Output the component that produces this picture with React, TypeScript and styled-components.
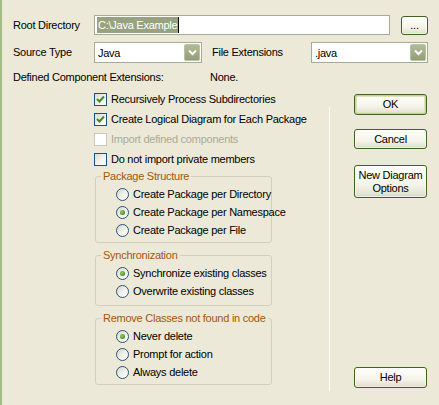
import React from "react";
import styled, { createGlobalStyle, css } from "styled-components";

const GlobalStyle = createGlobalStyle`
  html, body {
    margin: 0;
    padding: 0;
    background: #ece9d8;
  }
  body {
    font-family: "Liberation Sans", Arial, sans-serif;
    font-size: 11px;
    letter-spacing: -0.25px;
    color: #000;
  }
`;

const Window = styled.div`
  width: 439px;
  height: 405px;
  box-sizing: border-box;
  background: #ece9d8;
  border-left: 2px solid #a4bd86;
  padding: 15px 0 0 11px;
  display: flex;
  flex-direction: column;
`;

const Row = styled.div<{ $top?: number }>`
  display: flex;
  align-items: center;
  margin-top: ${(p) => p.$top ?? 0}px;
`;

const Label = styled.span<{ $width: number; $indent?: number }>`
  width: ${(p) => p.$width}px;
  margin-left: ${(p) => p.$indent ?? 0}px;
  line-height: 13px;
  white-space: nowrap;
  flex-shrink: 0;
`;

const TextBox = styled.div`
  width: 296px;
  height: 20px;
  box-sizing: border-box;
  border: 1px solid #a5ac93;
  background: #fff;
  padding: 1px 2px;
  display: flex;
  align-items: stretch;
`;

const Selected = styled.span`
  background: #98a27f;
  color: #fff;
  padding: 0 1px;
  line-height: 16px;
`;

const Caret = styled.span`
  width: 1px;
  background: #000;
`;

const XpButton = styled.button<{ $w: number; $h: number; $default?: boolean }>`
  width: ${(p) => p.$w}px;
  height: ${(p) => p.$h}px;
  box-sizing: border-box;
  padding: 0;
  font-family: inherit;
  font-size: 11px;
  letter-spacing: inherit;
  line-height: 13px;
  color: #000;
  border: 1px solid #3d6325;
  border-radius: 3px;
  background: linear-gradient(#fffffb 0%, #f5f4ea 60%, #e6e3d4 90%, #d6d0c0 100%);
  box-shadow: inset 0 0 0 1px rgba(255, 255, 255, 0.6);
  ${(p) =>
    p.$default &&
    css`
      box-shadow: inset 0 0 0 1px #bfd48f, inset 0 0 0 2px #d9e5b8;
    `}
`;

const Combo = styled.div<{ $w: number }>`
  width: ${(p) => p.$w}px;
  height: 21px;
  box-sizing: border-box;
  border: 1px solid #a5ac93;
  background: #fff;
  display: flex;
  align-items: center;
  padding: 1px;
`;

const ComboText = styled.span`
  flex: 1;
  padding-left: 2px;
`;

const DropArrow = styled.span`
  width: 16px;
  height: 17px;
  box-sizing: border-box;
  border: 1px solid #b9c1a4;
  border-radius: 2px;
  background: linear-gradient(#b3bc98, #929d77);
  display: flex;
  align-items: center;
  justify-content: center;
`;

const Body = styled.div`
  display: flex;
  margin-top: 5px;
  flex: 1;
`;

const Options = styled.div`
  position: relative;
  margin-left: 81px;
  width: 236px;
  display: flex;
  flex-direction: column;
  &::after {
    content: "";
    position: absolute;
    right: 0;
    top: 18px;
    bottom: 14px;
    width: 1px;
    background: #fff;
  }
`;

const CheckRow = styled.label<{ $disabled?: boolean }>`
  height: 20px;
  display: flex;
  align-items: center;
  gap: 4px;
  white-space: nowrap;
  color: ${(p) => (p.$disabled ? "#aca899" : "#000")};
`;

const Box = styled.span<{ $disabled?: boolean }>`
  width: 13px;
  height: 13px;
  box-sizing: border-box;
  border: 1px solid ${(p) => (p.$disabled ? "#cac8bb" : "#1c5180")};
  background: ${(p) =>
    p.$disabled ? "#fff" : "linear-gradient(135deg, #dcdcd7 0%, #f4f4f0 60%, #ffffff 100%)"};
  display: flex;
  align-items: center;
  justify-content: center;
`;

const Group = styled.fieldset<{ $top: number; $bottom: number }>`
  margin: ${(p) => p.$top}px 0 0 1px;
  width: 177px;
  box-sizing: border-box;
  border: 1px solid #d0d0bf;
  border-radius: 3px;
  padding: 2px 0 ${(p) => p.$bottom}px 20px;
  min-width: 0;
`;

const Legend = styled.legend`
  color: #a0570c;
  padding: 0 2px;
  margin-left: -15px;
  line-height: 13px;
  white-space: nowrap;
`;

const RadioRow = styled.label`
  height: 18px;
  display: flex;
  align-items: center;
  gap: 4px;
  white-space: nowrap;
`;

const Radio = styled.span<{ $on?: boolean }>`
  width: 13px;
  height: 13px;
  box-sizing: border-box;
  border-radius: 50%;
  border: 1px solid #2c5373;
  background: linear-gradient(135deg, #d6d5cd 0%, #f2f1ec 55%, #ffffff 100%);
  display: flex;
  align-items: center;
  justify-content: center;
  flex-shrink: 0;
  &::after {
    content: "";
    display: ${(p) => (p.$on ? "block" : "none")};
    width: 5px;
    height: 5px;
    border-radius: 50%;
    background: radial-gradient(circle at 40% 40%, #9fd36a 0%, #4a9a22 60%, #2f7313 100%);
  }
`;

const ButtonColumn = styled.div`
  margin-left: 24px;
  display: flex;
  flex-direction: column;
  padding-top: 5px;
`;

const Spacer = styled.div`
  flex: 1;
`;

const Check = () => (
  <svg width="9" height="9" viewBox="0 0 9 9">
    <path d="M1 4 L3.5 6.5 L8 1.5" fill="none" stroke="#3f8a22" strokeWidth="2" />
  </svg>
);

const Chevron = () => (
  <svg width="9" height="7" viewBox="0 0 9 7">
    <path d="M1 1.5 L4.5 5 L8 1.5" fill="none" stroke="#fff" strokeWidth="2" />
  </svg>
);

const checks = [
  { label: "Recursively Process Subdirectories", on: true },
  { label: "Create Logical Diagram for Each Package", on: true },
  { label: "Import defined components", disabled: true },
  { label: "Do not import private members" },
];

const groups = [
  {
    title: "Package Structure",
    top: 1,
    bottom: 3,
    items: ["Create Package per Directory", "Create Package per Namespace", "Create Package per File"],
    selected: 1,
  },
  {
    title: "Synchronization",
    top: 6,
    bottom: 5,
    items: ["Synchronize existing classes", "Overwrite existing classes"],
    selected: 0,
  },
  {
    title: "Remove Classes not found in code",
    top: 6,
    bottom: 3,
    items: ["Never delete", "Prompt for action", "Always delete"],
    selected: 0,
  },
];

export default function App() {
  return (
    <>
      <GlobalStyle />
      <Window>
        <Row>
          <Label $width={81}>Root Directory</Label>
          <TextBox>
            <Selected>C:\Java Example</Selected>
            <Caret />
          </TextBox>
          <XpButton $w={27} $h={19} style={{ marginLeft: 11 }}>
            ...
          </XpButton>
        </Row>
        <Row $top={7}>
          <Label $width={81}>Source Type</Label>
          <Combo $w={108}>
            <ComboText>Java</ComboText>
            <DropArrow>
              <Chevron />
            </DropArrow>
          </Combo>
          <Label $width={99} $indent={10}>
            File Extensions
          </Label>
          <Combo $w={117}>
            <ComboText>.java</ComboText>
            <DropArrow>
              <Chevron />
            </DropArrow>
          </Combo>
        </Row>
        <Row $top={8}>
          <Label $width={197}>Defined Component Extensions:</Label>
          <Label $width={40}>None.</Label>
        </Row>
        <Body>
          <Options>
            {checks.map((c) => (
              <CheckRow key={c.label} $disabled={c.disabled}>
                <Box $disabled={c.disabled}>{c.on && <Check />}</Box>
                {c.label}
              </CheckRow>
            ))}
            {groups.map((g) => (
              <Group key={g.title} $top={g.top} $bottom={g.bottom}>
                <Legend>{g.title}</Legend>
                {g.items.map((item, i) => (
                  <RadioRow key={item}>
                    <Radio $on={i === g.selected} />
                    {item}
                  </RadioRow>
                ))}
              </Group>
            ))}
          </Options>
          <ButtonColumn>
            <XpButton $w={73} $h={21} $default>
              OK
            </XpButton>
            <XpButton $w={73} $h={20} style={{ marginTop: 14 }}>
              Cancel
            </XpButton>
            <XpButton $w={73} $h={33} style={{ marginTop: 16 }}>
              New Diagram
              <br />
              Options
            </XpButton>
            <Spacer />
            <XpButton $w={73} $h={21} style={{ marginBottom: 17 }}>
              Help
            </XpButton>
          </ButtonColumn>
        </Body>
      </Window>
    </>
  );
}
